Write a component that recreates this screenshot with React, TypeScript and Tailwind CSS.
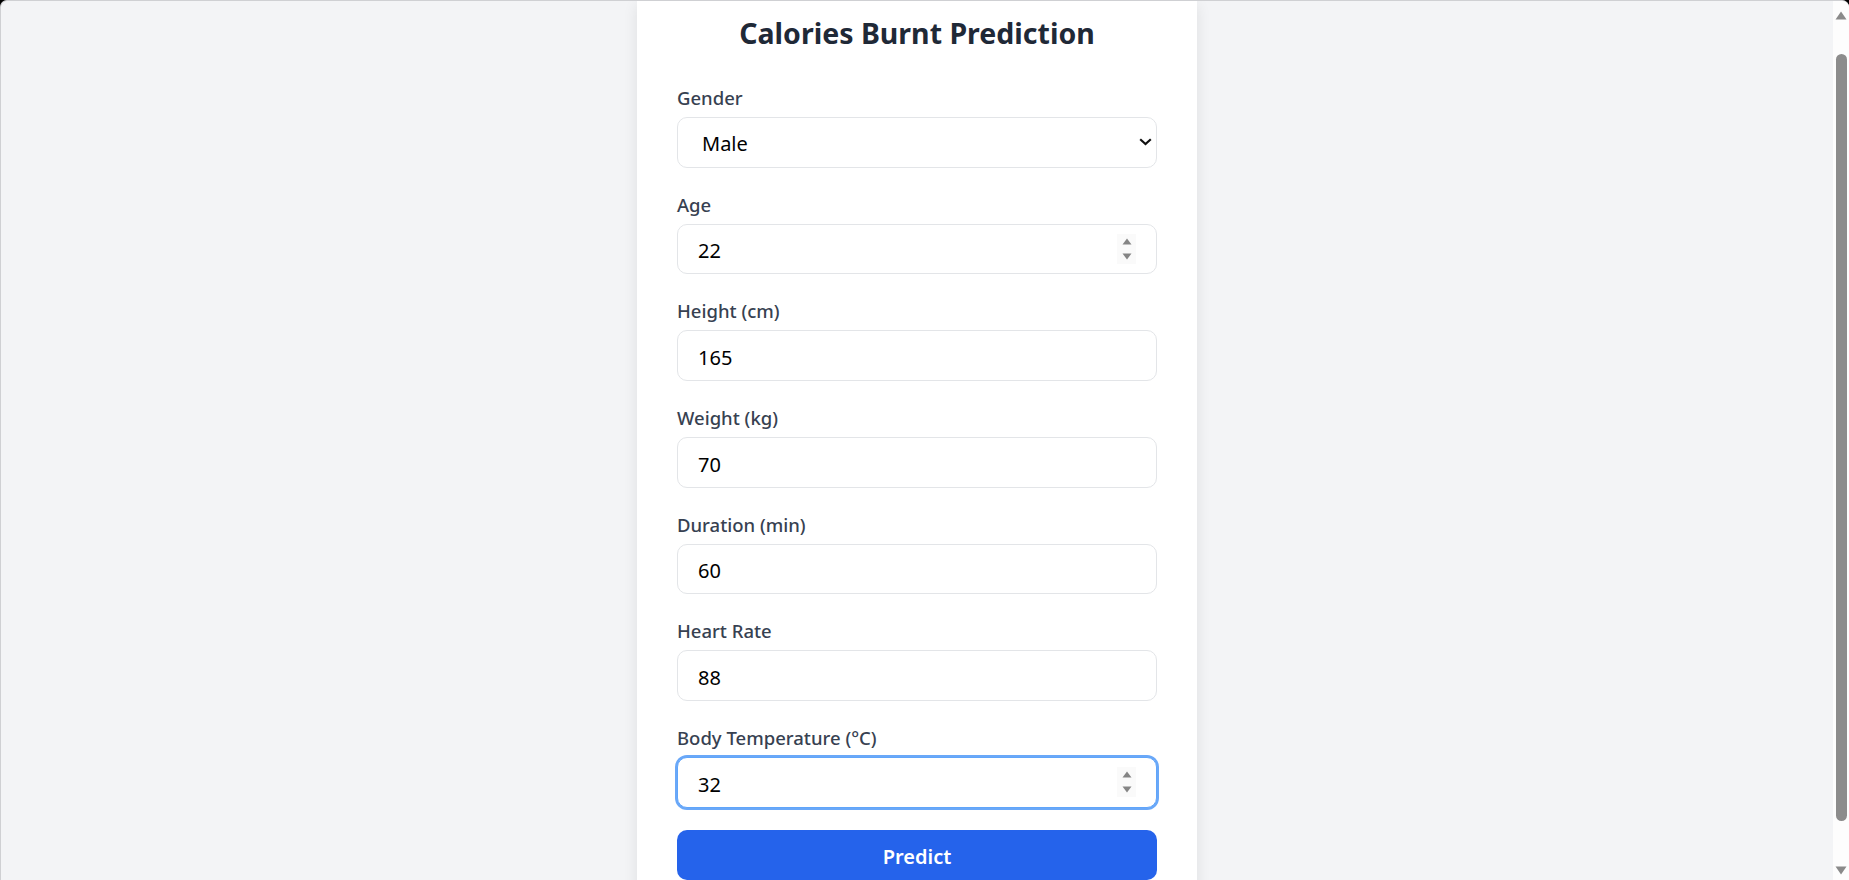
import React from "react";

const FONT = { fontFamily: '"Noto Sans", "Open Sans", Arial, sans-serif' };

type Field = { label: string; value: string; spinner?: boolean; focused?: boolean };

const fields: Field[] = [
  { label: "Age", value: "22", spinner: true },
  { label: "Height (cm)", value: "165" },
  { label: "Weight (kg)", value: "70" },
  { label: "Duration (min)", value: "60" },
  { label: "Heart Rate", value: "88" },
  { label: "Body Temperature (°C)", value: "32", spinner: true, focused: true },
];

function Spinner() {
  return (
    <div className="pointer-events-none absolute right-[21px] top-1/2 flex h-[30px] w-[19px] -translate-y-1/2 flex-col items-center justify-center gap-[8px] bg-[#fafafa]">
      <svg width="10" height="7" viewBox="0 0 10 7">
        <path d="M5 0.5 L9.5 6.5 L0.5 6.5 Z" fill="#858585" />
      </svg>
      <svg width="10" height="7" viewBox="0 0 10 7">
        <path d="M0.5 0.5 L9.5 0.5 L5 6.5 Z" fill="#858585" />
      </svg>
    </div>
  );
}

function Label({ children }: { children: React.ReactNode }) {
  return (
    <label className="block text-[18.5px] leading-[25px] font-medium text-[#374151]">{children}</label>
  );
}

export default function App() {
  return (
    <div className="h-screen w-full overflow-hidden bg-black" style={FONT}>
      <div className="flex h-full overflow-hidden rounded-t-[7px] border-t border-l border-[#cfd0d3] bg-[#f3f4f6]">
        <main className="flex flex-1 justify-center overflow-hidden">
          <div className="w-[560px] self-start bg-white px-10 pt-[14px] pb-10 shadow-[0_4px_14px_rgba(0,0,0,0.09)]">
            <h1 className="text-center text-[28.5px] leading-[36px] font-bold text-[#1f2937]">
              Calories Burnt Prediction
            </h1>
            <form className="mt-[34px] flex flex-col gap-[24px]" onSubmit={(e) => e.preventDefault()}>
              <div className="flex flex-col gap-[7px]">
                <Label>Gender</Label>
                <div className="relative">
                  <select
                    defaultValue="Male"
                    className="h-[50.67px] w-full appearance-none rounded-[10px] border border-[#e3e5e8] bg-white pt-[4px] pl-[24px] text-[20px] text-black outline-none"
                  >
                    <option>Male</option>
                    <option>Female</option>
                  </select>
                  <svg
                    className="pointer-events-none absolute right-[5px] top-1/2 -translate-y-1/2"
                    width="13"
                    height="8"
                    viewBox="0 0 13 8"
                  >
                    <path d="M1.2 1.2 L6.5 6 L11.8 1.2" fill="none" stroke="#111" strokeWidth="2.2" />
                  </svg>
                </div>
              </div>
              {fields.map((f) => (
                <div key={f.label} className="flex flex-col gap-[7px]">
                  <Label>{f.label}</Label>
                  <div className="relative">
                    <input
                      type="text"
                      inputMode="numeric"
                      defaultValue={f.value}
                      className={
                        f.focused
                          ? "h-[50.67px] w-full rounded-[10px] border border-[#60a5fa] bg-white px-5 pt-[4px] text-[20px] text-black outline-none ring-2 ring-[#6aa8f8]"
                          : "h-[50.67px] w-full rounded-[10px] border border-[#e3e5e8] bg-white px-5 pt-[4px] text-[20px] text-black outline-none"
                      }
                    />
                    {f.spinner && <Spinner />}
                  </div>
                </div>
              ))}
              <button
                type="submit"
                className="mt-[-2px] h-[50px] w-full rounded-[10px] bg-[#2563eb] pt-[4px] text-[20px] font-semibold text-white"
              >
                Predict
              </button>
            </form>
          </div>
        </main>
        <aside className="flex w-[16px] flex-col items-center bg-[#fdfdfd]">
          <svg className="mt-[10px] shrink-0" width="12" height="9" viewBox="0 0 12 9">
            <path d="M6 0.5 L11.5 8.5 L0.5 8.5 Z" fill="#8a8a8a" />
          </svg>
          <div className="mt-[34px] h-[767px] w-[11px] shrink-0 rounded-full bg-[#8c8c8c]" />
          <svg className="mt-[45px] shrink-0" width="12" height="9" viewBox="0 0 12 9">
            <path d="M0.5 0.5 L11.5 0.5 L6 8.5 Z" fill="#8a8a8a" />
          </svg>
        </aside>
      </div>
    </div>
  );
}
